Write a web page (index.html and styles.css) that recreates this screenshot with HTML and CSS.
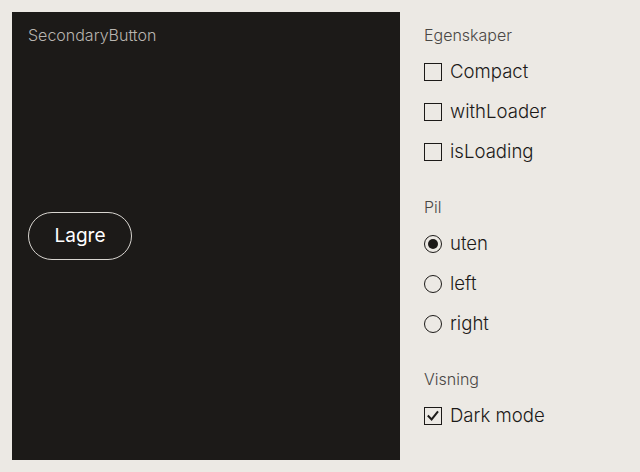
FILE: index.html
```html
<!DOCTYPE html>
<html lang="no">
<head>
<meta charset="utf-8">
<title>SecondaryButton</title>
<link rel="stylesheet" href="styles.css">
</head>
<body>
<div class="page">
  <section class="preview">
    <div class="preview-title">SecondaryButton</div>
    <div class="preview-stage">
      <button class="btn-secondary" type="button">Lagre</button>
    </div>
  </section>
  <aside class="controls">
    <div class="group">
      <div class="group-title">Egenskaper</div>
      <label class="row"><span class="box"></span><span class="label">Compact</span></label>
      <label class="row"><span class="box"></span><span class="label">withLoader</span></label>
      <label class="row"><span class="box"></span><span class="label">isLoading</span></label>
    </div>
    <div class="group">
      <div class="group-title">Pil</div>
      <label class="row"><span class="radio checked"></span><span class="label">uten</span></label>
      <label class="row"><span class="radio"></span><span class="label">left</span></label>
      <label class="row"><span class="radio"></span><span class="label">right</span></label>
    </div>
    <div class="group">
      <div class="group-title">Visning</div>
      <label class="row"><span class="box checked"><svg viewBox="0 0 18 18" width="18" height="18"><path d="M4.5 9.2 L7.6 12.4 L13.4 5.2" fill="none" stroke="#1c1a18" stroke-width="2" stroke-linecap="square"/></svg></span><span class="label">Dark mode</span></label>
    </div>
  </aside>
</div>
</body>
</html>
```
FILE: styles.css
```css
* { box-sizing: border-box; }
html, body { margin: 0; padding: 0; }
body {
  background: #ece9e4;
  font-family: Inter, "Liberation Sans", sans-serif;
  color: #1c1a18;
  width: 640px;
  height: 472px;
  overflow: hidden;
}
.page {
  display: flex;
  padding: 12px;
  gap: 24px;
}
.preview {
  width: 388px;
  height: 448px;
  background: #1c1a18;
  padding: 11px 16px 16px;
  display: flex;
  flex-direction: column;
}
.preview-title {
  font-size: 16px;
  line-height: 24px;
  color: #b8b5b0;
  font-weight: 300;
}
.preview-stage {
  flex: 1;
  display: flex;
  align-items: center;
  margin-top: -19px;
}
.btn-secondary {
  height: 48px;
  width: 104px;
  border-radius: 24px;
  border: 1px solid #d8d5d0;
  background: transparent;
  color: #ffffff;
  font-family: Inter, "Liberation Sans", sans-serif;
  font-size: 19px;
  font-weight: 400;
  padding: 0 0 2px;
}
.controls {
  display: flex;
  flex-direction: column;
  gap: 23px;
  padding-top: 11px;
}
.group { display: flex; flex-direction: column; }
.group-title {
  font-size: 16px;
  line-height: 24px;
  color: #4a4744;
  font-weight: 300;
  margin-bottom: 5px;
}
.row {
  display: flex;
  align-items: center;
  gap: 8px;
  height: 40px;
}
.label {
  font-size: 18.6px;
  font-weight: 300;
  color: #1c1a18;
  line-height: 24px;
  margin-top: -3px;
}
.box {
  width: 18px;
  height: 18px;
  border: 1.5px solid #1c1a18;
  display: inline-flex;
  align-items: center;
  justify-content: center;
  position: relative;
}
.box svg { position: absolute; left: -1.5px; top: -1.5px; }
.radio {
  width: 18px;
  height: 18px;
  border: 1.5px solid #1c1a18;
  border-radius: 50%;
  display: inline-flex;
  align-items: center;
  justify-content: center;
}
.radio.checked::after {
  content: "";
  width: 10px;
  height: 10px;
  border-radius: 50%;
  background: #1c1a18;
}
```
